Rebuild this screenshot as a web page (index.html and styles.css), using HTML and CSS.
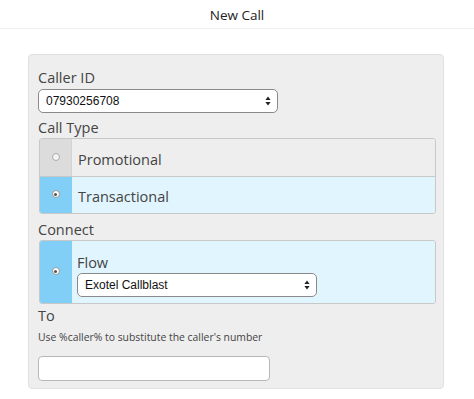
FILE: index.html
```html
<!DOCTYPE html>
<html lang="en">
<head>
    <meta charset="UTF-8">
    <title>New Call</title>
    <link rel="stylesheet" href="styles.css">
</head>
<body>
    <header class="top-bar">New Call</header>

    <div class="panel">
        <div class="label">Caller ID</div>
        <div class="select caller-select">
            <span>07930256708</span>
            <svg class="arrows" width="6" height="10" viewBox="0 0 6 10"><path d="M3 0.5 L5.6 4 L0.4 4 Z M3 9.5 L5.6 6 L0.4 6 Z" fill="#222"/></svg>
        </div>

        <div class="label">Call Type</div>
        <div class="option-group">
            <div class="option">
                <div class="option-side"><span class="radio"></span></div>
                <div class="option-body">Promotional</div>
            </div>
            <div class="option selected">
                <div class="option-side"><span class="radio checked"></span></div>
                <div class="option-body">Transactional</div>
            </div>
        </div>

        <div class="label">Connect</div>
        <div class="option-group">
            <div class="option selected tall">
                <div class="option-side"><span class="radio checked"></span></div>
                <div class="option-body">
                    <div class="flow-label">Flow</div>
                    <div class="select flow-select">
                        <span>Exotel Callblast</span>
                        <svg class="arrows" width="6" height="10" viewBox="0 0 6 10"><path d="M3 0.5 L5.6 4 L0.4 4 Z M3 9.5 L5.6 6 L0.4 6 Z" fill="#222"/></svg>
                    </div>
                </div>
            </div>
        </div>

        <div class="label to-label">To</div>
        <div class="hint">Use %caller% to substitute the caller's number</div>
        <input class="text-input" type="text">
    </div>
</body>
</html>
```

FILE: styles.css
```css
* {
    margin: 0;
    padding: 0;
    box-sizing: border-box;
}

body {
    background-color: #fff;
    color: #333;
    font-family: 'Open Sans', sans-serif;
}

.top-bar {
    height: 29px;
    line-height: 31px;
    text-align: center;
    font-size: 13.5px;
    color: #222;
    border-bottom: 1px solid #eeeeee;
}

.panel {
    margin: 25px 0 0 28px;
    width: 416px;
    height: 335px;
    background-color: #eeeeee;
    border: 1px solid #e0e0e0;
    border-radius: 4px;
    padding: 13px 9px 0 9px;
}

.label {
    font-size: 14.5px;
    line-height: 20px;
    color: #444;
}

.select {
    display: flex;
    align-items: center;
    justify-content: space-between;
    width: 240px;
    height: 24px;
    background-color: #fff;
    border: 1px solid #8a8a8a;
    border-radius: 5px;
    padding: 0 6px 0 7px;
    font-family: 'Liberation Sans', Arial, sans-serif;
    font-size: 12px;
    color: #111;
}

.caller-select {
    margin: 1px 0 5px 0;
}

.option-group {
    margin: 0 0 6px 1px;
    width: 397px;
    border: 1px solid #c8c8c8;
    border-radius: 3px;
    overflow: hidden;
}

.option {
    display: flex;
    height: 37px;
}

.option + .option {
    border-top: 1px solid #c8c8c8;
}

.option-side {
    width: 32px;
    flex-shrink: 0;
    display: flex;
    align-items: center;
    justify-content: center;
    background-color: #dcdcdc;
    border-right: 1px solid #d4d4d4;
}

.option-body {
    flex: 1;
    display: flex;
    align-items: center;
    padding: 3px 0 0 6px;
    font-size: 14.5px;
    color: #444;
    background-color: #eeeeee;
}

.option.selected .option-side {
    background-color: #81cff6;
    border-right-color: #81cff6;
}

.option.selected .option-body {
    background-color: #e1f5fe;
}

.option.tall {
    height: 62px;
}

.option.tall .option-body {
    flex-direction: column;
    align-items: flex-start;
    justify-content: flex-start;
    padding: 12px 0 0 5px;
}

.flow-label {
    line-height: 20px;
}

.radio {
    display: block;
    width: 8px;
    height: 8px;
    border-radius: 50%;
    border: 1px solid #aaa;
    background-color: #f4f4f4;
    margin-top: -2px;
}

.radio.checked {
    background-color: #fff;
    border-color: #999;
    position: relative;
}

.radio.checked::after {
    content: "";
    position: absolute;
    left: 1.5px;
    top: 1.5px;
    width: 3px;
    height: 3px;
    border-radius: 50%;
    background-color: #555;
}

.to-label {
    margin-top: -4px;
}

.hint {
    margin-top: 3px;
    font-size: 10.4px;
    line-height: 16px;
    color: #444;
}

.text-input {
    display: block;
    margin-top: 11px;
    width: 232px;
    height: 25px;
    border: 1px solid #b8b8b8;
    border-radius: 4px;
    background-color: #fff;
}
```
